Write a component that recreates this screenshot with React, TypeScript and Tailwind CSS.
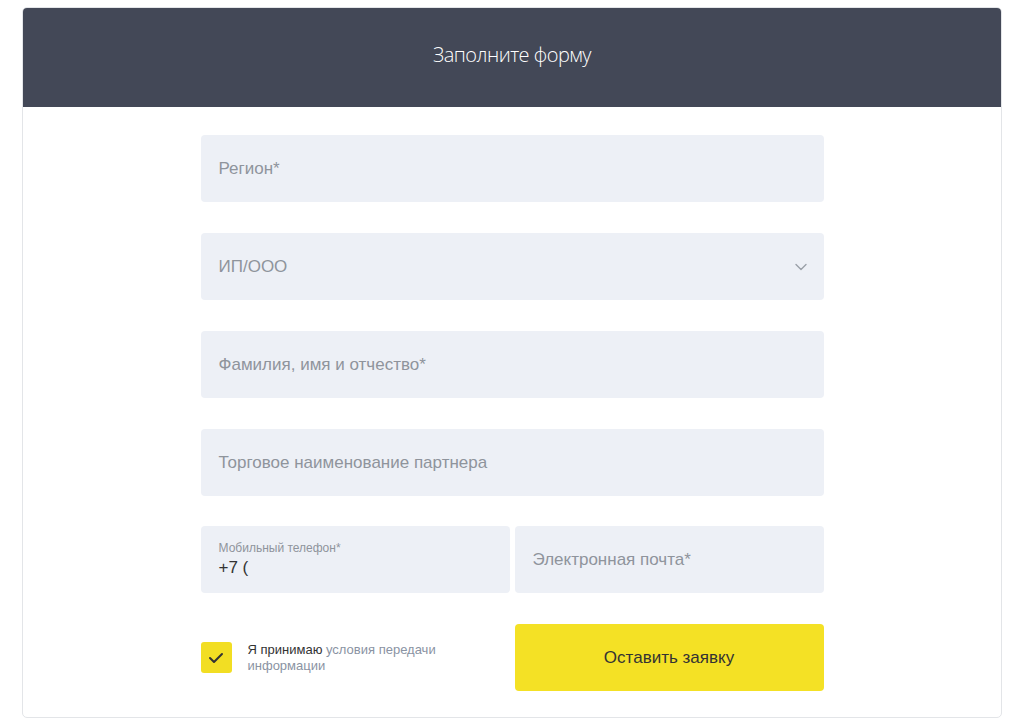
const fieldCls =
  "h-[67px] rounded-[4px] bg-[#edf0f6] flex items-center px-[18px] text-[17px] text-[#8f949c]";

export default function App() {
  return (
    <div className="min-h-screen bg-white pt-[7px] px-[22px] font-['Liberation_Sans',Arial,sans-serif]">
      <div className="w-[980px] border border-[#e3e5e8] rounded-[5px] overflow-hidden">
        <div className="h-[99px] bg-[#434857] flex items-center justify-center pb-[6px]">
          <h1 className="text-white text-[20px] font-light tracking-[-0.5px] font-['Open_Sans',sans-serif]">
            Заполните форму
          </h1>
        </div>

        <div className="pt-[28px] pb-[26px] flex justify-center">
          <div className="w-[623px] flex flex-col gap-[31px]">
            <div className={fieldCls}>Регион*</div>

            <div className={`${fieldCls} justify-between`}>
              <span>ИП/ООО</span>
              <svg width="12" height="8" viewBox="0 0 12 8" fill="none" className="mr-[-1px]">
                <path d="M1 1.5l5 5 5-5" stroke="#9aa0a8" strokeWidth="1.4" strokeLinecap="round" strokeLinejoin="round" />
              </svg>
            </div>

            <div className={fieldCls}>Фамилия, имя и отчество*</div>

            <div className={fieldCls}>Торговое наименование партнера</div>

            <div className="grid grid-cols-2 gap-[5px] -mt-px">
              <div className="h-[67px] rounded-[4px] bg-[#edf0f6] px-[18px] flex flex-col justify-center">
                <span className="text-[12px] text-[#8f949c] leading-[14px]">Мобильный телефон*</span>
                <span className="text-[17px] text-[#333] leading-[22px] mt-[2px]">+7 (</span>
              </div>
              <div className={fieldCls}>Электронная почта*</div>
            </div>

            <div className="grid grid-cols-2 gap-[5px]">
              <div className="flex items-center gap-[16px]">
                <div className="w-[31px] h-[31px] rounded-[3px] bg-[#f2de23] flex items-center justify-center shrink-0">
                  <svg width="16" height="12" viewBox="0 0 16 12" fill="none">
                    <path d="M2 6l4 4 8-8" stroke="#333" strokeWidth="2" strokeLinecap="round" strokeLinejoin="round" />
                  </svg>
                </div>
                <p className="text-[13px] leading-[16px] text-[#333]">
                  Я принимаю <span className="text-[#8a93a3]">условия передачи</span>
                  <br />
                  <span className="text-[#8a93a3]">информации</span>
                </p>
              </div>
              <button className="h-[67px] rounded-[4px] bg-[#f4e125] text-[17px] text-[#333]">
                Оставить заявку
              </button>
            </div>
          </div>
        </div>
      </div>
    </div>
  );
}
